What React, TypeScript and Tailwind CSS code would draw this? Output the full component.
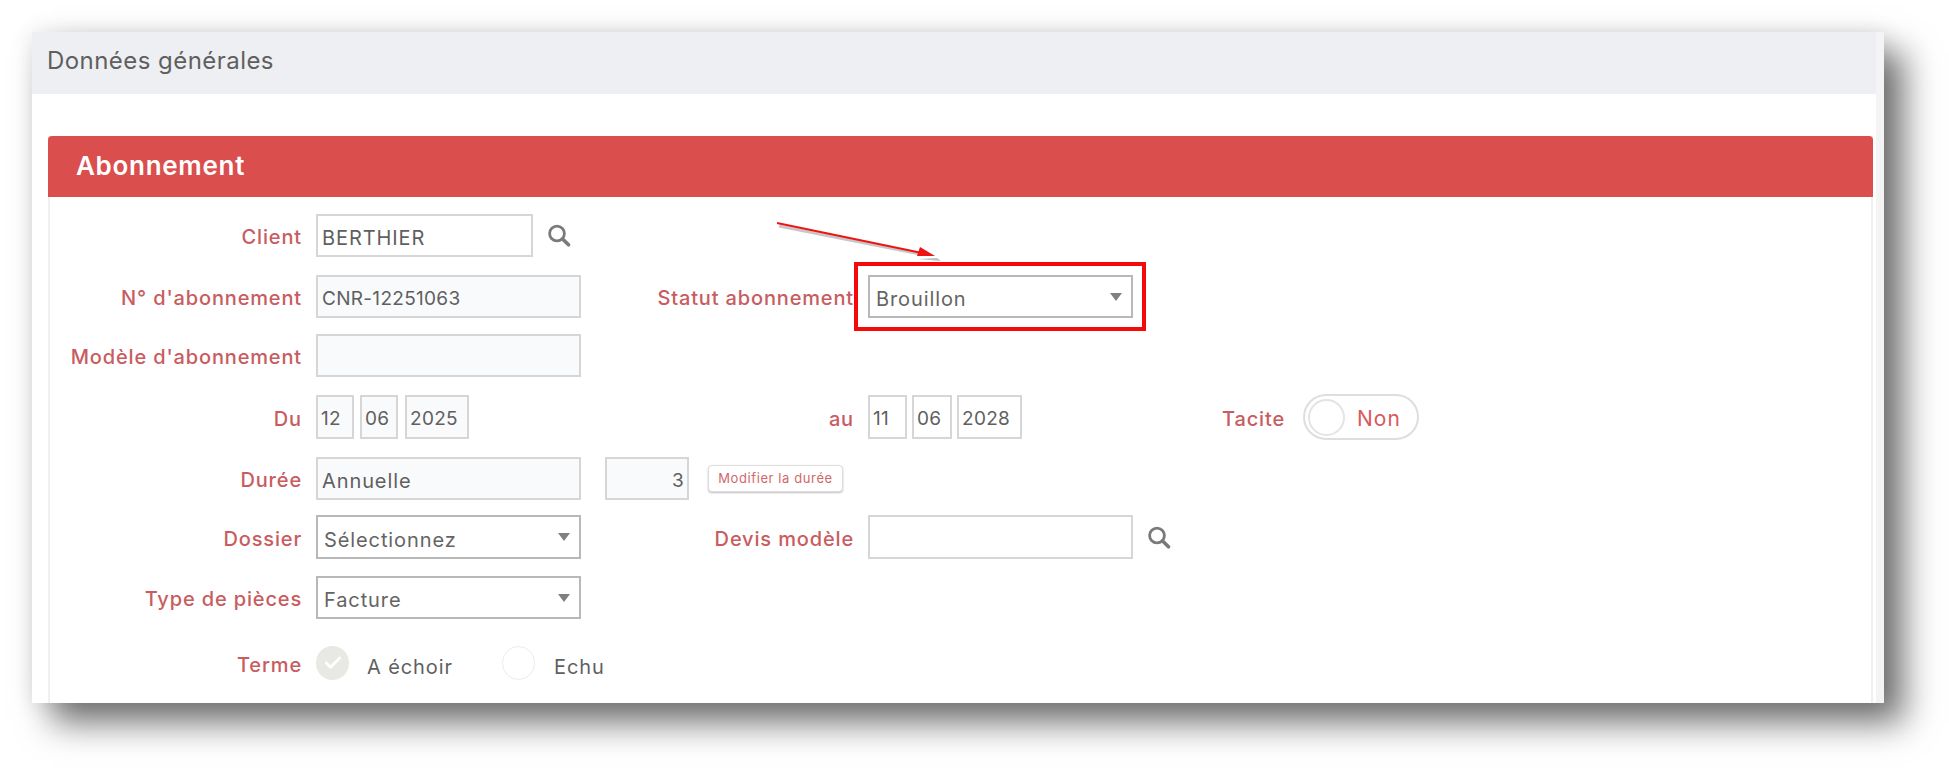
import React from "react";
import { Check } from "lucide-react";

const font = "font-['Inter','Liberation_Sans',sans-serif]";
const TEXT = "text-[20px] tracking-[0.9px]";
const DIGITS = "text-[19px] tracking-[0.3px]";

function Label({ w, children }: { w: string; children: React.ReactNode }) {
  return (
    <div className={`${w} shrink-0 pt-[3px] text-right text-[20px] leading-[26px] font-medium tracking-[0.85px] text-[#c85c60] whitespace-nowrap`}>
      {children}
    </div>
  );
}

function Box({ className, children }: { className: string; children?: React.ReactNode }) {
  return (
    <div className={`${className} shrink-0 flex items-center border-2 border-[#d6d6d6] pt-[5px] text-[#5f5f5f]`}>
      {children}
    </div>
  );
}

function Select({ w, h, children }: { w: string; h: string; children: React.ReactNode }) {
  return (
    <div className={`${w} ${h} shrink-0 flex items-center justify-between border-2 border-[#b8b8b8] bg-white pl-[6px] pr-[9px] ${TEXT} text-[#646464]`}>
      <span className="pt-[5px]">{children}</span>
      <span className="w-0 h-0 border-l-[6px] border-r-[6px] border-t-[8px] border-l-transparent border-r-transparent border-t-[#808080]" />
    </div>
  );
}

function Row({ h, mt, children }: { h: string; mt: string; children: React.ReactNode }) {
  return <div className={`flex items-center ${h} ${mt}`}>{children}</div>;
}

function SearchIcon() {
  return (
    <svg className="ml-[14px] shrink-0" width="24" height="23" viewBox="0 0 24 23" fill="none">
      <circle cx="10" cy="9.5" r="7.4" stroke="#7a7a7a" strokeWidth="2.8" />
      <path d="M15.6 15 L21.5 20.8" stroke="#7a7a7a" strokeWidth="3.6" strokeLinecap="round" />
    </svg>
  );
}

const L1 = "w-[254px] mr-[14px]";
const L2 = "w-[273px] mr-[14px]";

function DateBoxes({ vals, ws, gaps, bg }: { vals: string[]; ws: string[]; gaps: string[]; bg: string }) {
  return (
    <div className="flex shrink-0">
      {vals.map((v, i) => (
        <Box key={v + i} className={`${ws[i]} ${gaps[i]} ${bg} h-[44px] pl-[3px] ${DIGITS}`}>{v}</Box>
      ))}
    </div>
  );
}

export default function App() {
  return (
    <div className={`relative w-[1949px] h-[768px] overflow-hidden bg-white pl-[32px] pt-[32px] ${font}`}>
      <div className="w-[1852px] h-[671px] bg-white overflow-hidden shadow-[20px_20px_32px_rgba(0,0,0,0.55),0_0_22px_rgba(0,0,0,0.1)] relative border-r-[8px] border-r-[#f4f4f4]">
        <div className="h-[62px] bg-[#eeeff2] flex items-center pl-[15px] pb-[4px] text-[24px] tracking-[0.45px] text-[#5f5f5f] -mr-[8px]">
          Données générales
        </div>
        <div className="mt-[42px] ml-[16px] mr-[3px] h-[567px] border-l-2 border-r-2 border-[#f0f0f0] -mb-[1px]">
          <div className="-mx-[2px] h-[61px] bg-[#da4e4e] rounded-t-[4px] flex items-center pl-[28px] pb-[2px] text-[26px] tracking-[0.7px] font-semibold text-white">
            Abonnement
          </div>
          <div className="pt-[17px] -ml-[2px]">
            <Row h="h-[43px]" mt="mt-0">
              <Label w={L1}>Client</Label>
              <Box className={`w-[217px] h-[43px] bg-white pl-[4px] ${TEXT}`}>BERTHIER</Box>
              <SearchIcon />
            </Row>
            <Row h="h-[43px]" mt="mt-[18px]">
              <Label w={L1}>N° d'abonnement</Label>
              <Box className={`w-[265px] h-[43px] bg-[#f9fafc] pl-[4px] ${DIGITS}`}>CNR-12251063</Box>
              <Label w={L2}>Statut abonnement</Label>
              <Select w="w-[265px]" h="h-[43px]">Brouillon</Select>
            </Row>
            <Row h="h-[43px]" mt="mt-[16px]">
              <Label w={L1}>Modèle d'abonnement</Label>
              <Box className="w-[265px] h-[43px] bg-[#f9fafc]" />
            </Row>
            <Row h="h-[44px]" mt="mt-[18px]">
              <Label w={L1}>Du</Label>
              <DateBoxes vals={["12", "06", "2025"]} ws={["w-[38px]", "w-[38px]", "w-[64px]"]} gaps={["mr-[6px]", "mr-[7px]", ""]} bg="bg-[#f9fafc]" />
              <div className="w-[112px] shrink-0" />
              <Label w={L2}>au</Label>
              <DateBoxes vals={["11", "06", "2028"]} ws={["w-[39px]", "w-[40px]", "w-[65px]"]} gaps={["mr-[5px]", "mr-[5px]", ""]} bg="bg-white" />
              <Label w="w-[263px] mr-[18px]">Tacite</Label>
              <div className="w-[116px] h-[46px] shrink-0 flex items-center rounded-full border-2 border-[#dedede] bg-white pl-[3px]">
                <div className="w-[37px] h-[37px] rounded-full border-2 border-[#e4e4e4] bg-white" />
                <span className="ml-[12px] pt-[3px] text-[21px] tracking-[1px] text-[#d9595c]">Non</span>
              </div>
            </Row>
            <Row h="h-[43px]" mt="mt-[18px]">
              <Label w={L1}>Durée</Label>
              <Box className={`w-[265px] h-[43px] bg-[#f9fafc] pl-[4px] ${TEXT}`}>Annuelle</Box>
              <Box className={`ml-[24px] w-[84px] h-[43px] bg-[#f9fafc] justify-end pr-[3px] ${DIGITS}`}>3</Box>
              <div className="ml-[19px] w-[135px] h-[27px] shrink-0 flex items-center justify-center rounded-[4px] border border-[#ddd] shadow-[0_1px_2px_rgba(0,0,0,0.25)] bg-white text-[13px] tracking-[0.6px] text-[#d0686b]">
                Modifier la durée
              </div>
            </Row>
            <Row h="h-[44px]" mt="mt-[15px]">
              <Label w={L1}>Dossier</Label>
              <Select w="w-[265px]" h="h-[44px]">Sélectionnez</Select>
              <Label w={L2}>Devis modèle</Label>
              <Box className="w-[265px] h-[44px] bg-white" />
              <SearchIcon />
            </Row>
            <Row h="h-[43px]" mt="mt-[17px]">
              <Label w={L1}>Type de pièces</Label>
              <Select w="w-[265px]" h="h-[43px]">Facture</Select>
            </Row>
            <Row h="h-[34px]" mt="mt-[27px]">
              <Label w={L1}>Terme</Label>
              <div className="w-[33px] h-[34px] shrink-0 rounded-full bg-[#e8e8e4] flex items-center justify-center">
                <Check className="w-[20px] h-[20px] text-white" strokeWidth={3.4} />
              </div>
              <span className={`ml-[18px] w-[135px] shrink-0 pt-[8px] ${TEXT} text-[#5f5f5f]`}>A échoir</span>
              <div className="w-[33px] h-[34px] shrink-0 rounded-full border border-[#ececec] bg-white" />
              <span className={`ml-[19px] pt-[8px] ${TEXT} text-[#5f5f5f]`}>Echu</span>
            </Row>
          </div>
        </div>
      </div>

      {/* red annotation */}
      <div className="absolute left-[854px] top-[262px] w-[292px] h-[69px] border-[4px] border-[#f50a0a] pointer-events-none" />
      <svg className="absolute left-[770px] top-[215px] pointer-events-none" width="180" height="55" viewBox="0 0 180 55">
        <path d="M9 11 L150 39" stroke="rgba(0,0,0,0.22)" strokeWidth="3" fill="none" />
        <path d="M7 8 L152 38" stroke="#ee1414" strokeWidth="2" fill="none" />
        <path d="M150 32 L165 41 L147 41 Z" fill="#ee1414" />
        <path d="M148 44 L167 43 L171 46 Z" fill="rgba(0,0,0,0.25)" />
      </svg>
    </div>
  );
}
